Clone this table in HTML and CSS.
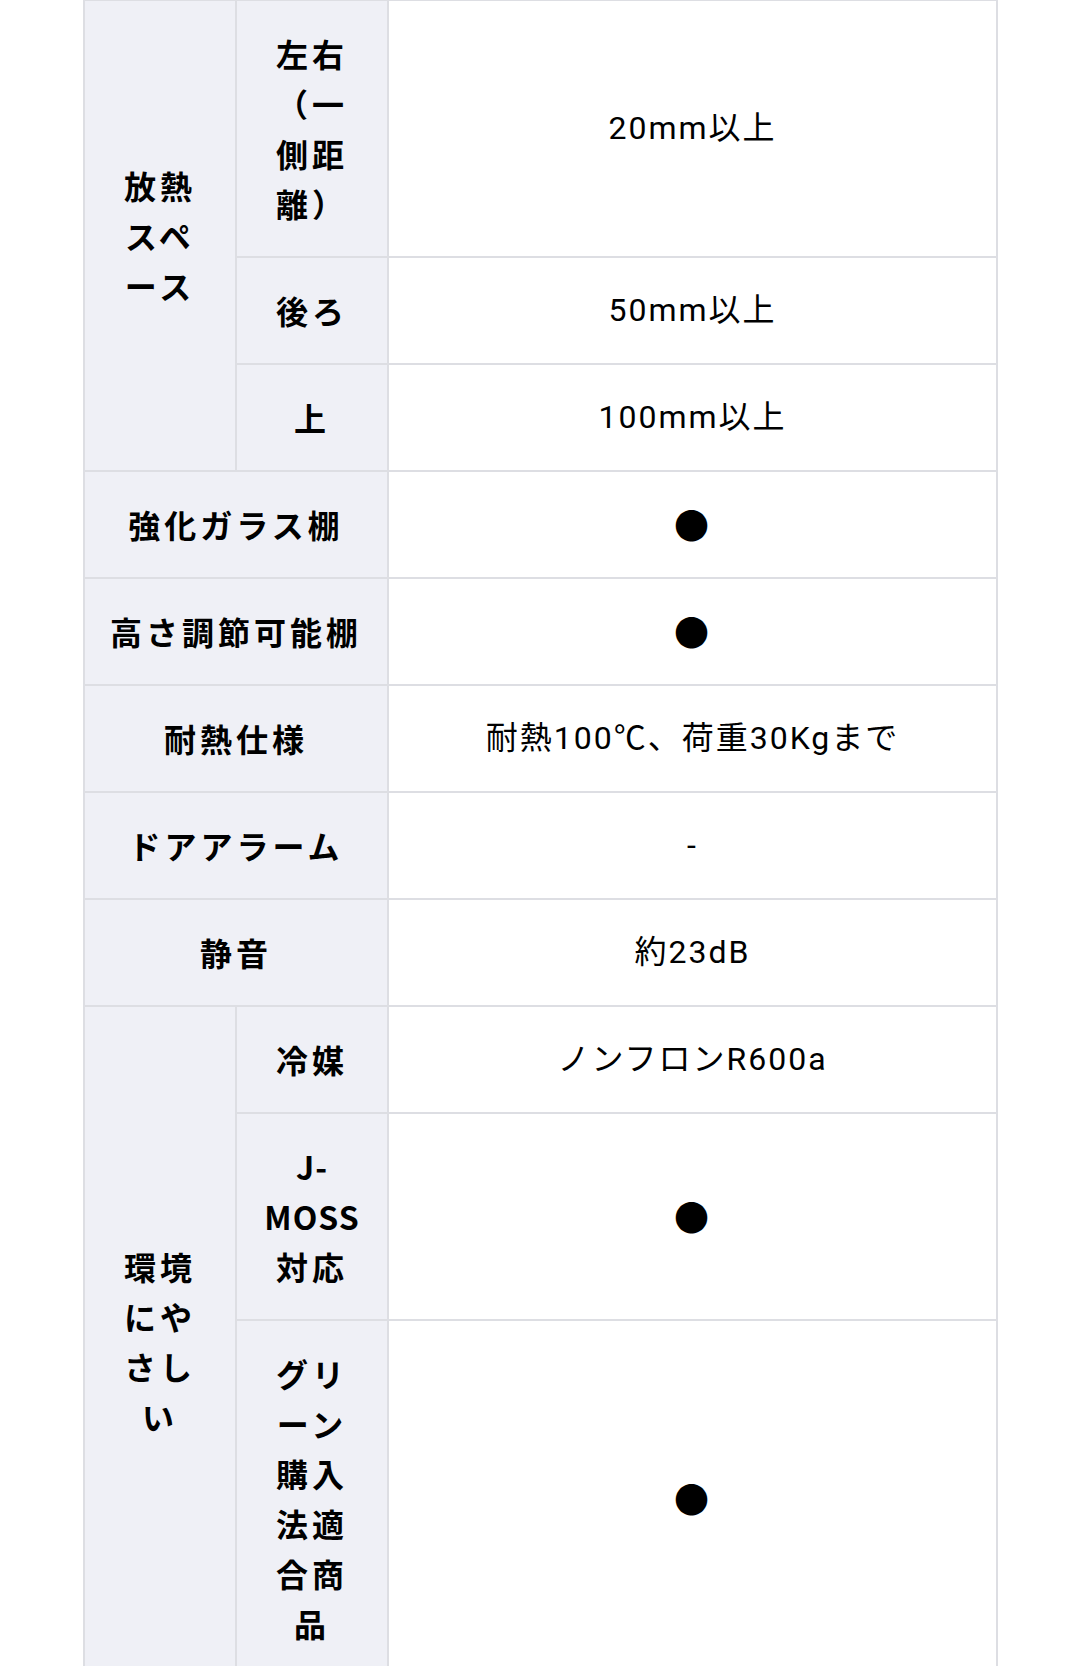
FILE: index.html
```html
<!DOCTYPE html>
<html lang="ja">
<head>
<meta charset="utf-8">
<link rel="stylesheet" href="styles.css">
</head>
<body>
<table class="spec">
  <colgroup><col class="c1"><col class="c2"><col class="c3"></colgroup>
  <tbody>
    <tr><th rowspan="3">放熱スペース</th><th>左右（一側距離）</th><td>20mm以上</td></tr>
    <tr><th>後ろ</th><td>50mm以上</td></tr>
    <tr><th>上</th><td>100mm以上</td></tr>
    <tr><th colspan="2">強化ガラス棚</th><td class="dot">●</td></tr>
    <tr><th colspan="2">高さ調節可能棚</th><td class="dot">●</td></tr>
    <tr><th colspan="2">耐熱仕様</th><td>耐熱100℃、荷重30Kgまで</td></tr>
    <tr><th colspan="2">ドアアラーム</th><td>-</td></tr>
    <tr><th colspan="2">静音</th><td>約23dB</td></tr>
    <tr><th rowspan="3">環境にやさしい</th><th>冷媒</th><td>ノンフロンR600a</td></tr>
    <tr><th><span class="lat">J-MOSS</span>対応</th><td class="dot">●</td></tr>
    <tr><th>グリーン購入法適合商品</th><td class="dot">●</td></tr>
  </tbody>
</table>
</body>
</html>
```
FILE: styles.css
```css
html, body {
  margin: 0;
  padding: 0;
  background: #ffffff;
}
body {
  font-family: "Noto Sans CJK JP", "Noto Sans", sans-serif;
  color: #000000;
}
.spec {
  width: 915px;
  margin: -1px 0 0 83px;
  border-collapse: collapse;
  table-layout: fixed;
}
.spec .c1 { width: 152px; }
.spec .c2 { width: 152px; }
.spec th,
.spec td {
  border: 2px solid #dddee3;
  padding: 27px 25px 28px;
  line-height: 50px;
  text-align: center;
  vertical-align: middle;
}
.spec th {
  background: #eff0f6;
  font-size: 32px;
  font-weight: 700;
  letter-spacing: 4px;
  color: #000000;
}
.spec th .lat {
  letter-spacing: 1px;
}
.spec td {
  background: #ffffff;
  font-family: Roboto, "Noto Sans CJK JP", sans-serif;
  font-size: 32px;
  font-weight: 400;
  letter-spacing: 2px;
}
.spec td.dot {
  font-family: "Noto Sans CJK JP", sans-serif;
  font-size: 35px;
}
```
